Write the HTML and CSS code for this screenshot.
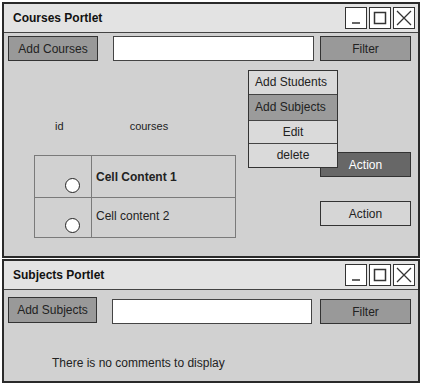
FILE: index.html
```html
<!DOCTYPE html>
<html lang="en">
  <head>
    <meta charset="UTF-8" />
    <title>Portlets</title>
    <link rel="stylesheet" href="styles.css">
  </head>
  <body>
    <div class="portlet courses">
      <div class="title-bar">
        <span class="title">Courses Portlet</span>
        <div class="win-controls">
          <span class="win-btn"><svg width="20" height="20" viewBox="0 0 20 20"><path d="M6 15 L14 15" stroke="#333" stroke-width="1.5" fill="none"/></svg></span>
          <span class="win-btn"><svg width="20" height="20" viewBox="0 0 20 20"><rect x="4.5" y="4.5" width="11" height="11" stroke="#333" stroke-width="1.5" fill="none"/></svg></span>
          <span class="win-btn"><svg width="20" height="20" viewBox="0 0 20 20"><path d="M3 3 L17 17 M17 3 L3 17" stroke="#333" stroke-width="1.3" fill="none"/></svg></span>
        </div>
      </div>

      <div class="toolbar">
        <button class="btn gray add-btn">Add Courses</button>
        <input type="text" class="search" />
        <button class="btn gray filter-btn">Filter</button>
      </div>

      <div class="content">
        <div class="left">
          <div class="headers">
            <span class="h-id">id</span>
            <span class="h-courses">courses</span>
          </div>
          <div class="table">
            <div class="row">
              <div class="cell check"><span class="radio"></span></div>
              <div class="cell text bold">Cell Content 1</div>
            </div>
            <div class="row">
              <div class="cell check"><span class="radio"></span></div>
              <div class="cell text raised">Cell content 2</div>
            </div>
          </div>
        </div>
        <div class="actions">
          <button class="btn dark">Action</button>
          <button class="btn light">Action</button>
        </div>
      </div>

      <!-- dropdown menu over the content -->
      <div class="menu">
        <div class="menu-item first">Add Students</div>
        <div class="menu-item selected">Add Subjects</div>
        <div class="menu-item center">Edit</div>
        <div class="menu-item center last">delete</div>
      </div>
    </div>

    <div class="portlet subjects">
      <div class="title-bar">
        <span class="title">Subjects Portlet</span>
        <div class="win-controls">
          <span class="win-btn"><svg width="20" height="20" viewBox="0 0 20 20"><path d="M6 15 L14 15" stroke="#333" stroke-width="1.5" fill="none"/></svg></span>
          <span class="win-btn"><svg width="20" height="20" viewBox="0 0 20 20"><rect x="4.5" y="4.5" width="11" height="11" stroke="#333" stroke-width="1.5" fill="none"/></svg></span>
          <span class="win-btn"><svg width="20" height="20" viewBox="0 0 20 20"><path d="M3 3 L17 17 M17 3 L3 17" stroke="#333" stroke-width="1.3" fill="none"/></svg></span>
        </div>
      </div>

      <div class="toolbar sub-toolbar">
        <button class="btn gray add-btn sub-add">Add Subjects</button>
        <input type="text" class="search sub-search" />
        <button class="btn gray filter-btn sub-filter">Filter</button>
      </div>

      <p class="empty">There is no comments to display</p>
    </div>
  </body>
</html>
```

FILE: styles.css
```css
* {
  box-sizing: border-box;
}
body {
  margin: 0;
  padding: 2px;
  width: 422px;
  height: 384px;
  background: #ffffff;
  font-family: "Liberation Sans", Arial, sans-serif;
  font-size: 12px;
  color: #222;
  overflow: hidden;
}
.portlet {
  position: relative;
  width: 418px;
  border: 2px solid #2a2a2a;
  background: #d1d1d1;
}
.courses {
  height: 256px;
}
.subjects {
  height: 124px;
  margin-top: 1px;
}
.title-bar {
  display: flex;
  align-items: center;
  justify-content: space-between;
  height: 29px;
  background: #e3e3e3;
  border-bottom: 1px solid #444;
  padding: 0 3px 0 9px;
}
.title {
  font-weight: bold;
  font-size: 12px;
  color: #111;
}
.win-controls {
  display: flex;
  gap: 2px;
}
.win-btn {
  display: flex;
  align-items: center;
  justify-content: center;
  width: 22px;
  height: 22px;
  background: #fff;
  border: 1.5px solid #333;
}
.toolbar {
  display: flex;
  align-items: center;
  padding: 3px 0 0 4px;
}
.btn {
  font-family: "Liberation Sans", Arial, sans-serif;
  font-size: 12px;
  height: 25px;
  border: 1.5px solid #333;
  padding: 0;
  color: #222;
}
.gray {
  background: #999999;
}
.add-btn {
  width: 90px;
}
.search {
  width: 201px;
  height: 25px;
  margin-left: 15px;
  border: 1.5px solid #444;
  background: #fff;
}
.filter-btn {
  width: 91px;
  margin-left: 6px;
}
.content {
  display: flex;
}
.left {
  margin-left: 30px;
  width: 202px;
}
.headers {
  height: 14px;
  margin-top: 59px;
  font-size: 11px;
}
.h-id {
  margin-left: 21px;
}
.h-courses {
  margin-left: 63px;
}
.table {
  margin-top: 21px;
  border: 1px solid #7a7a7a;
}
.row {
  display: flex;
  height: 41px;
}
.row + .row {
  height: 40px;
  border-top: 1px solid #7a7a7a;
}
.cell.check {
  width: 57px;
  border-right: 1px solid #7a7a7a;
  display: flex;
  align-items: flex-end;
  padding: 0 0 4px 30px;
}
.radio {
  width: 15px;
  height: 15px;
  border-radius: 50%;
  background: #fff;
  border: 1.5px solid #222;
}
.cell.text {
  display: flex;
  align-items: center;
  padding-left: 4px;
}
.cell.raised {
  padding-bottom: 4px;
}
.bold {
  font-weight: bold;
}
.actions {
  display: flex;
  flex-direction: column;
  gap: 24px;
  margin-left: 84px;
  padding-top: 91px;
}
.actions .btn {
  width: 91px;
}
.dark {
  background: #676767;
  color: #fff;
}
.light {
  background: #d6d6d6;
}
.menu {
  position: absolute;
  left: 244px;
  top: 66px;
  width: 90px;
  border: 1.5px solid #333;
  background: #dadada;
}
.menu-item {
  height: 23px;
  line-height: 22px;
  padding-left: 6px;
  font-size: 12px;
  border-top: 1.5px solid #444;
}
.menu-item.first {
  border-top: none;
}
.menu-item.selected {
  height: 26px;
  line-height: 24px;
  background: #9b9b9b;
}
.menu-item.center {
  text-align: center;
  padding-left: 0;
}
.menu-item.last {
  height: 24px;
}
.sub-toolbar {
  padding-top: 6px;
}
.sub-add {
  width: 89px;
  height: 26px;
}
.sub-search {
  margin-left: 15px;
  margin-top: 3px;
  width: 200px;
}
.sub-filter {
  margin-left: 8px;
  margin-top: 3px;
}
.empty {
  margin: 32px 0 0 48px;
  font-size: 12px;
}
```
